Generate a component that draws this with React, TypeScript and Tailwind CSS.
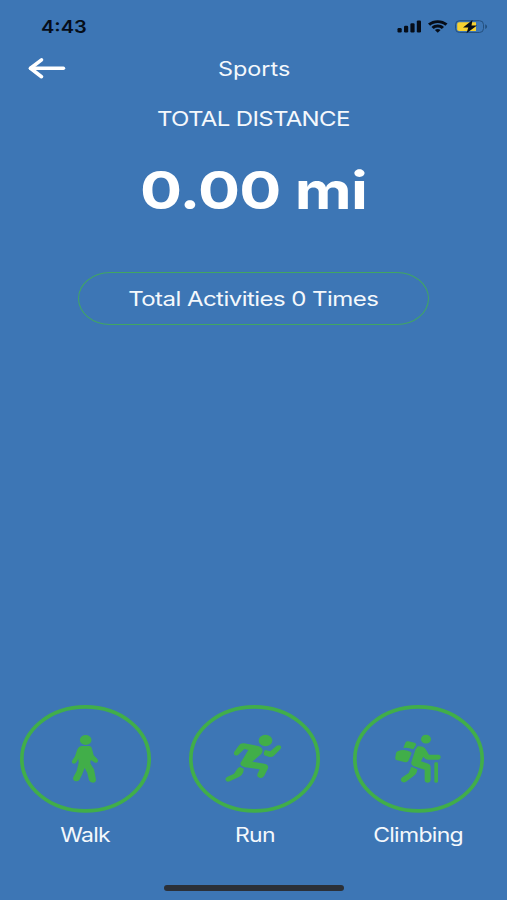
import type { ReactNode } from "react";

function Arrow() {
  return (
    <svg className="block h-[24px] w-[40px]" viewBox="0 0 40 24" fill="none" stroke="white" strokeLinecap="round" strokeLinejoin="round">
      <path d="M3.500 11.300H36.500" strokeWidth="3.400" />
      <path d="M14.500 2.900L3.500 11.300L14.500 19.700" strokeWidth="3.600" />
    </svg>
  );
}

function StatusIcons() {
  return (
    <svg className="block h-[20px] w-[96px]" viewBox="0 0 96 20">
      <g fill="#060d18">
        <rect x="2.5" y="12" width="4.2" height="4.5" rx="1.2" />
        <rect x="9" y="9.8" width="4.2" height="6.7" rx="1.2" />
        <rect x="15.4" y="7.2" width="4.2" height="9.3" rx="1.2" />
        <rect x="21.8" y="4.4" width="4.2" height="12.1" rx="1.2" />
        <path d="M33 7.6C38.5 3 47 3 52.5 7.6L50.4 9.7C46 6.2 39.500 6.200 35.100 9.700Z" />
        <path d="M36.500 10.900C40.300 7.800 45.200 7.800 49 10.900L46.800 12.900C44.300 11.100 41.200 11.100 38.700 12.900Z" />
        <path d="M39.900 14C41.700 12.700 43.800 12.700 45.600 14L42.750 16.800Z" />
      </g>
      <rect x="60.500" y="4.700" width="28" height="11.800" rx="4" fill="none" stroke="#24507f" strokeWidth="1" />
      <path d="M90.200 8.300C92.700 9.200 92.700 12.200 90.200 13.100Z" fill="#24507f" />
      <path d="M64 6.300H81V14.900H64Q62.200 14.900 62.200 13.200V8Q62.200 6.300 64 6.300Z" fill="#f7d130" />
      <path d="M77.500 4L68 11.400H73.300L71.500 17.200L82 9.600H76.500Z" fill="#060d18" />
    </svg>
  );
}

function WalkIcon() {
  return (
    <svg className="block h-[108px] w-[131px]" viewBox="30 30 393 324" fill="#41ae49">
      <ellipse cx="226.500" cy="191.500" rx="191" ry="156" fill="none" stroke="#41ae49" strokeWidth="11" />
      <ellipse cx="227" cy="135" rx="17.500" ry="15" />
      <path d="M214 153H239Q245 154 246 162L251 181L262 192Q266 198 262 202Q258 205 253 202L242 195L241 205L252 223L258 254Q258 262 249 263Q240 263 237 256L232 234L224 219L216 239L208 255Q203 260 195 258Q187 255 190 247L200 228L206 203L205 192L198 203Q192 209 187 204Q184 201 187 196L195 184L202 163Q206 154 214 153Z" />
    </svg>
  );
}

function RunIcon() {
  return (
    <svg className="block h-[108px] w-[131px]" viewBox="27 30 393 324" fill="#41ae49">
      <ellipse cx="223.500" cy="191.500" rx="191" ry="156" fill="none" stroke="#41ae49" strokeWidth="11" />
      <ellipse cx="256.500" cy="136.500" rx="20.500" ry="17" />
      <path d="M192 145L234 153Q250 157 247 171Q245 178 236 184L217 200L253 206Q267 209 264 220L253 242Q247 251 238 248Q230 245 232 238L239 223L195 217Q178 213 182 203L205 165L193 162L178 176Q171 185 164 180Q160 176 163 170L176 152Q181 144 192 145Z" />
      <path d="M180 216L192 221Q190 226 190 232Q187 240 178 245L149 259Q141 263 137 256Q134 250 141 246L162 236L171 223Q174 217 180 216Z" />
      <path d="M255 165L271 169L290 152Q299 148 303 154Q305 158 301 163L281 183Q274 188 266 185L253 181Q249 173 255 165Z" />
    </svg>
  );
}

function ClimbIcon() {
  return (
    <svg className="block h-[108px] w-[131px]" viewBox="24 30 393 324" fill="#41ae49">
      <ellipse cx="220.500" cy="191.500" rx="191" ry="156" fill="none" stroke="#41ae49" strokeWidth="11" />
      <ellipse cx="243" cy="132.500" rx="15" ry="13" />
      <path d="M190 139L209 143Q215 145 213 150L205 163Q190 157 175 159L181 143Q184 138 190 139Z" />
      <path d="M158 169Q176 161 196 170Q201 172 199 177L190 198Q186 203 178 201L156 196Q149 194 151 187L153 175Q154 170 158 169Z" />
      <path d="M218 154Q233 152 240 160L252 179H281Q288 180 287 187Q287 194 280 194H248Q242 194 239 190L235 185L228 199L250 206Q257 209 257 216V255Q256 263 247 263Q238 262 239 254V224L207 214Q197 210 199 202L212 162Z" />
      <path d="M199 215L217 223Q216 237 206 243L183 260Q175 265 169 259Q165 252 172 247L191 234Z" />
      <rect x="268" y="202" width="11" height="61" rx="4" />
    </svg>
  );
}

function Activity({ icon, label }: { icon: ReactNode; label: string }) {
  return (
    <button className="flex w-[131px] flex-col items-center">
      {icon}
      <span className="mt-[8px] scale-x-[1.18] text-[19.500px] leading-[28px] tracking-[-0.6px]">{label}</span>
    </button>
  );
}

export default function App() {
  return (
    <main className="flex h-[900px] w-[507px] flex-col overflow-hidden bg-[#3d76b5] font-['Inter','Liberation_Sans',sans-serif] text-[#f4f8fc]">
      <header>
        <div className="flex h-[52px] items-center justify-between pr-[16px] pl-[41px] text-[#060d18]">
          <span className="mt-[4px] origin-left scale-x-[1.18] text-[17px] font-semibold">4:43</span>
          <StatusIcons />
        </div>
        <div className="grid h-[34px] grid-cols-[1fr_auto_1fr] items-center pl-[27px]">
          <Arrow />
          <h1 className="mt-[2px] mr-[25px] scale-x-[1.2] text-[19.500px]">Sports</h1>
        </div>
      </header>
      <section className="flex flex-col items-center">
        <h2 className="mt-[18px] scale-x-[1.2] text-[20px] leading-[30px] tracking-[-0.55px]">TOTAL DISTANCE</h2>
        <p className="mt-[25px] scale-x-[1.2] text-[52px] leading-[64px] font-bold tracking-[-0.6px] text-white">0.00 mi</p>
        <div className="mt-[49px] flex h-[53px] w-[351px] items-center justify-center rounded-[32px/26.500px] border border-[#41a662]">
          <span className="scale-x-[1.2] text-[20px] tracking-[-0.45px]">Total Activities 0 Times</span>
        </div>
      </section>
      <nav className="mt-auto flex pl-[20px]">
        <Activity icon={<WalkIcon />} label="Walk" />
        <div className="ml-[38px]">
          <Activity icon={<RunIcon />} label="Run" />
        </div>
        <div className="ml-[33px]">
          <Activity icon={<ClimbIcon />} label="Climbing" />
        </div>
      </nav>
      <footer className="flex h-[51px] items-end justify-center pb-[9px] pl-px">
        <div className="h-[6px] w-[180px] rounded-full bg-[#2b3038]" />
      </footer>
    </main>
  );
}
